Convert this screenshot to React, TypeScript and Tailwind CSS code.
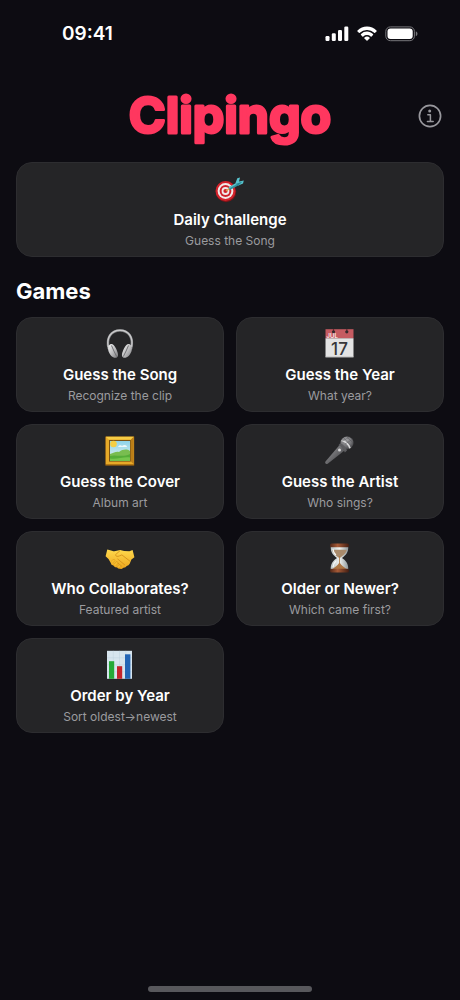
import React from 'react';

interface Game {
  title: string;
  subtitle: string;
  icon: React.ReactNode;
}

const Icon = ({ children }: { children: React.ReactNode }) => (
  <svg viewBox="0 0 30 30" className="h-[30px] w-[30px]" aria-hidden="true">
    {children}
  </svg>
);

const TargetIcon = () => (
  <Icon>
    <ellipse cx="11" cy="17.6" rx="10.2" ry="10.6" fill="#7f1418" />
    <circle cx="10.5" cy="17" r="10" fill="#d3222b" />
    <circle cx="10.5" cy="17" r="7.9" fill="#f1e9e8" />
    <circle cx="10.5" cy="17" r="5.9" fill="#cf222b" />
    <circle cx="10.5" cy="17" r="3.9" fill="#f1e9e8" />
    <circle cx="10.5" cy="17" r="2.1" fill="#cf222b" />
    <path d="M11 17 16 13.3" stroke="#d9a441" strokeWidth="1.3" />
    <path d="M13.5 13.5 22 8.5 24 11 15 16Z" fill="#2b93a0" />
    <path d="M13.5 13.5 22 8.5 23 9.6 14.2 14.6Z" fill="#5bc4ca" />
    <path d="M20.5 9 22.3 4.2 25 3.5 24 7.4 28.8 6.5 28 9.6 23.500 11.4Z" fill="#58c3cd" />
    <path d="M20.5 10 27.5 7.4 23.5 11.4Z" fill="#278796" />
  </Icon>
);

const HeadphonesIcon = () => (
  <Icon>
    <defs>
      <linearGradient id="cup" x1="0" y1="0" x2="1" y2="1">
        <stop offset="0" stopColor="#f5f5f5" />
        <stop offset="0.55" stopColor="#b9b9bb" />
        <stop offset="1" stopColor="#77777a" />
      </linearGradient>
    </defs>
    <path d="M3.8 20C.8 9 6 1.5 15 1.5S29 9 26 20" fill="none" stroke="#77787a" strokeWidth="2.6" />
    <path d="M3.3 18C1.2 8.5 6.4 1.2 15 1.2S28.6 8.5 26.5 18" fill="none" stroke="#c8c8ca" strokeWidth="1.5" />
    <path d="M5 15.5C7 14 9.4 16 11 19.5S14.3 27 11.8 28.5C8.8 30 5 26.5 3.5 22.2 2.6 19.3 3.1 16.6 5 15.5Z" fill="url(#cup)" />
    <path d="M25 15.5C23 14 20.6 16 19 19.5S15.7 27 18.2 28.5C21.2 30 25 26.5 26.5 22.2 27.4 19.3 26.9 16.6 25 15.5Z" fill="url(#cup)" />
    <path d="M6.5 16.5C8 20 9.7 24 11.7 27.6M23.5 16.5C22 20 20.3 24 18.3 27.6" fill="none" stroke="#68686b" strokeWidth="0.9" />
  </Icon>
);

const CalendarIcon = () => (
  <Icon>
    <path d="M.5 .2h28v9.3H.5Z" fill="#c55b61" />
    <path d="M.5 9.3h28V28H.5Z" fill="#e3e3e3" />
    <path d="M.5 27.5h28v1H.5Z" fill="#b8b8b8" />
    <path d="M8.500 0v2.8M21.8 0v2.8" stroke="#6d2b31" strokeWidth="1.2" />
    <circle cx="8.5" cy="2.8" r="1.6" fill="#35292c" />
    <circle cx="21.8" cy="2.8" r="1.6" fill="#35292c" />
    <text x="1.600" y="9.2" fontSize="6" fill="#fff" className="font-['Inter',sans-serif] font-medium">JUL</text>
    <text x="14.5" y="25.5" textAnchor="middle" fontSize="17" fill="#37373a" className="font-['Inter',sans-serif] font-medium">17</text>
  </Icon>
);

const PictureIcon = () => (
  <Icon>
    <defs>
      <linearGradient id="sky" x1="0" y1="0" x2="0" y2="1">
        <stop offset="0" stopColor="#8ed3ea" />
        <stop offset="1" stopColor="#e4f4ee" />
      </linearGradient>
    </defs>
    <path d="M.4.6h28.8v29H.4Z" fill="#a96b10" />
    <path d="M.8.8h28v27.4H.8Z" fill="#e6a928" />
    <path d="M.8.8h28L26 3.6H3.6Z" fill="#f6cc45" />
    <path d="M28.8.8v27.4L26 25.6v-22Z" fill="#bb7e17" />
    <path d="M4 4h21.8v21.6H4Z" fill="#7b5315" />
    <path d="M5 5h20v19.8H5Z" fill="url(#sky)" />
    <circle cx="8.5" cy="8" r="3.3" fill="#f5cf43" />
    <path d="M13 11c1-2 3-2 4-1 2-2 5-1 5 1Z" fill="#edf8fa" />
    <path d="M5 18c4-1 6-3 9-2 4-3 8-3 11-1v9.8H5Z" fill="#79bd50" />
    <path d="M5 20c6-2 12 2 20-2v6.8H5Z" fill="#55ad38" />
    <path d="M5 22.5c7 1 14-2 20-1v3.3H5Z" fill="#76c64d" />
  </Icon>
);

const MicrophoneIcon = () => (
  <Icon>
    <defs>
      <linearGradient id="handle" x1="0" y1="0" x2="1" y2="1">
        <stop offset="0" stopColor="#9b9b9d" />
        <stop offset="0.5" stopColor="#6c6c6f" />
        <stop offset="1" stopColor="#303033" />
      </linearGradient>
      <radialGradient id="grille" cx="0.4" cy="0.3" r="0.75">
        <stop offset="0" stopColor="#a8a8aa" />
        <stop offset="0.6" stopColor="#727275" />
        <stop offset="1" stopColor="#3b3b3e" />
      </radialGradient>
    </defs>
    <path d="M15 8.5 19.5 14.5 3 27.5Q1.600 28.500.6 27.500-.2 26.400.5 25.500Z" fill="url(#handle)" />
    <circle cx="22" cy="7" r="6.5" fill="url(#grille)" />
    <path d="M15.2 7.3C18 8.3 21 11.2 22 14.6L19.8 16.6C18.8 13 16.2 10.2 13.4 9.3Z" fill="#5d5d60" />
    <path d="M16.6 4.5C20 5 24.2 8.7 25 12.3" fill="none" stroke="#d9d9da" strokeWidth="1.7" />
    <path d="M19 2 26 10M22 1 28 7M17 5l8-4M20 8l8-5" stroke="#5b5b5e" strokeWidth="0.5" />
    <circle cx="14.5" cy="14" r="1.5" fill="#d4d4d5" />
  </Icon>
);

const HandshakeIcon = () => (
  <Icon>
    <defs>
      <linearGradient id="skin" x1="0" y1="0" x2="0" y2="1">
        <stop offset="0" stopColor="#ffd94d" />
        <stop offset="1" stopColor="#eda51c" />
      </linearGradient>
    </defs>
    <path d="M2.3 6.6 7 7.7q2.1 1 4.8.1l3.3-.8 4 1.1 5.3.2L27.6 7l1.8 7.2-3 2.4-1.7 4.2q-1 2-3 2.2-1 2-3.3 1.8-1.3 1.6-3.1.9-2 .5-3.4-1.4-2.5.5-3.5-1.7-2.5-.3-2.6-2.6L3.5 16 .6 13.2Z" fill="url(#skin)" />
    <path d="M14.7 8 10.5 11.7q.5 2.7 4.2 1.1l2.2-.9 7.8 6.1M12.8 16.1l6.8 5.7M11.4 18.9l5.2 4.3" fill="none" stroke="#cf8c18" strokeWidth="0.8" strokeLinecap="round" />
    <path d="M6 18.5 8 16.6q1.7-.7 2 .9l-2 2.4M9 21.4l2.3-2.7q1.9-.3 1.7 1.4l-2 2.6M12.4 24l1.6-2.4q1.8 0 1.5 1.6l-1.1 1.6" fill="#f9bd2d" stroke="#d79a1e" strokeWidth="0.6" />
  </Icon>
);

const HourglassIcon = () => (
  <Icon>
    <defs>
      <linearGradient id="wood" x1="0" x2="1">
        <stop offset="0" stopColor="#512719" />
        <stop offset="0.4" stopColor="#a75b37" />
        <stop offset="1" stopColor="#421d12" />
      </linearGradient>
      <linearGradient id="glass" x1="0" x2="1">
        <stop offset="0" stopColor="#b8c2c4" />
        <stop offset="0.5" stopColor="#eff1ef" />
        <stop offset="1" stopColor="#8f999d" />
      </linearGradient>
    </defs>
    <path d="M5.8 3.5h17.4c.4 6-2.4 8.6-6.2 11.5 3.8 2.7 6.7 5.7 6.2 11.5H5.8C5.3 20.7 8.2 17.7 12 15 8.2 12.1 5.4 9.5 5.8 3.5Z" fill="url(#glass)" />
    <path d="M7.2 6.8h14.6c-.6 3.7-3.8 5.8-6.6 8h-1.4c-2.8-2.2-6-4.3-6.6-8Z" fill="#a98b6c" />
    <path d="M14.1 13h.8v7c1.5 3 4.3 3.4 6.3 6H7.8c2-2.6 4.8-3 6.3-6Z" fill="#ac7644" />
    <rect x="5" y=".5" width="19" height="3.8" rx="1.6" fill="url(#wood)" />
    <rect x="5" y="25.8" width="19" height="3.8" rx="1.6" fill="url(#wood)" />
    <path d="M8 6c.3 3 1.4 5 3 6M8 24c.2-2.7 1.2-4.4 3-6" fill="none" stroke="#f8fafa" strokeWidth="1.1" />
  </Icon>
);

const ChartIcon = () => (
  <Icon>
    <path d="M2 .8h25v28H2Z" fill="#d7e5ee" />
    <path d="M2 7.8h25M2 14.8h25M2 21.8h25M8.3.8v28M14.5.8v28M20.8.8v28" stroke="#bfd2de" strokeWidth="0.5" />
    <path d="M4 11.2h5.2v17.6H4Z" fill="#25a936" />
    <path d="M12 16.2h5.2v12.6H12Z" fill="#c4232b" />
    <path d="M20 4.3h5.4v24.5H20Z" fill="#2365b5" />
  </Icon>
);

const GAMES: Game[] = [
  { title: 'Guess the Song', subtitle: 'Recognize the clip', icon: <HeadphonesIcon /> },
  { title: 'Guess the Year', subtitle: 'What year?', icon: <CalendarIcon /> },
  { title: 'Guess the Cover', subtitle: 'Album art', icon: <PictureIcon /> },
  { title: 'Guess the Artist', subtitle: 'Who sings?', icon: <MicrophoneIcon /> },
  { title: 'Who Collaborates?', subtitle: 'Featured artist', icon: <HandshakeIcon /> },
  { title: 'Older or Newer?', subtitle: 'Which came first?', icon: <HourglassIcon /> },
  { title: 'Order by Year', subtitle: 'Sort oldest→newest', icon: <ChartIcon /> },
];

const GameCard: React.FC<Game> = ({ title, subtitle, icon }) => (
  <button
    type="button"
    className="flex w-full flex-col items-center rounded-2xl border border-[#2d2d30] bg-[#252527] pt-[11px] pb-[7px] text-center"
  >
    {icon}
    <span className="mt-1 text-[15px] leading-6 font-semibold text-white">{title}</span>
    <span className="mt-px text-[12px] leading-4 text-[#9b9b9f]">{subtitle}</span>
  </button>
);

const StatusBar = () => (
  <div className="flex h-[68px] items-center justify-between pr-[42px] pl-[62px]">
    <span className="text-[19px] leading-6 font-semibold">09:41</span>
    <div className="flex items-center gap-2">
      <svg viewBox="0 0 24 16" className="h-4 w-6" fill="#fff" aria-hidden="true">
        <rect x=".5" y="10" width="4" height="5" rx="1.2" />
        <rect x="6.8" y="7.3" width="4" height="7.7" rx="1.2" />
        <rect x="13" y="4" width="4" height="11" rx="1.2" />
        <rect x="19.3" y=".5" width="4" height="14.5" rx="1.2" />
      </svg>
      <svg viewBox="0 0 20 16" className="h-4 w-5" fill="#fff" aria-hidden="true">
        <path d="M10 .6c3.7 0 7 1.4 9.5 3.8.3.3.3.7 0 1l-1.4 1.4c-.3.3-.6.3-.9 0A10.3 10.3 0 0 0 10 4a10.3 10.3 0 0 0-7.2 2.8c-.3.3-.6.3-.9 0L.5 5.4c-.3-.3-.3-.7 0-1A13.6 13.6 0 0 1 10 .6Z" />
        <path d="M10 5.6c2.3 0 4.4.9 6 2.4.3.3.3.7 0 1l-1.4 1.4c-.3.3-.6.3-.9 0a5.4 5.4 0 0 0-7.4 0c-.3.3-.6.3-.9 0L4 9c-.3-.3-.3-.7 0-1a8.7 8.7 0 0 1 6-2.4Z" />
        <path d="M10 10.5c1 0 1.8.3 2.5.9.3.3.3.7 0 1l-2 2c-.3.3-.7.3-1 0l-2-2c-.3-.3-.3-.7 0-1 .7-.6 1.5-.9 2.5-.9Z" />
      </svg>
      <svg viewBox="0 0 33 16" className="h-4 w-[33px]" aria-hidden="true">
        <rect x=".8" y=".9" width="28.6" height="13.8" rx="4.5" fill="none" stroke="#77777b" />
        <rect x="2.5" y="2.6" width="25.2" height="10.4" rx="3" fill="#fff" />
        <path d="M30.8 5.3c2.2.8 2.2 4.2 0 5Z" fill="#77777b" />
      </svg>
    </div>
  </div>
);

// The stroke rounds off the corners of the heavy letters
const Wordmark = () => (
  <svg viewBox="0 0 220 64" className="h-16 w-[220px]" role="img" aria-label="Clipingo">
    <text
      x="110"
      y="49"
      textAnchor="middle"
      fontSize="50"
      fill="#ff375f"
      stroke="#ff375f"
      strokeWidth="3"
      strokeLinejoin="round"
      className="font-['Inter',sans-serif] font-bold"
    >
      Clipingo
    </text>
  </svg>
);

export default function App() {
  return (
    <div className="flex min-h-screen flex-col bg-[#0d0c12] font-['Inter','Liberation_Sans',sans-serif] text-white">
      <StatusBar />

      <main className="flex-1 px-4">
        <header className="grid grid-cols-[1fr_auto_1fr] items-center pt-4">
          <h1 className="col-start-2">
            <Wordmark />
          </h1>
          <button type="button" aria-label="About" className="justify-self-end pr-[2px]">
            <svg viewBox="0 0 24 24" className="h-6 w-6" fill="none" stroke="#98989d" aria-hidden="true">
              <circle cx="12" cy="12" r="10.6" strokeWidth="1.7" />
              <circle cx="11.7" cy="7" r="1.5" fill="#98989d" stroke="none" />
              <path d="M9.8 10.8h2.6v6.500M9.4 17.5h5.8" strokeWidth="1.5" strokeLinecap="round" strokeLinejoin="round" />
            </svg>
          </button>
        </header>

        <div className="mt-[14px]">
          <GameCard title="Daily Challenge" subtitle="Guess the Song" icon={<TargetIcon />} />
        </div>

        <h2 className="mt-[18px] mb-[10px] text-[22px] leading-8 font-bold">Games</h2>
        <div className="grid grid-cols-2 gap-3">
          {GAMES.map((game) => (
            <GameCard key={game.title} {...game} />
          ))}
        </div>
      </main>

      <div className="mx-auto mb-2 h-[6px] w-[164px] rounded-full bg-[#58585c]" />
    </div>
  );
}
